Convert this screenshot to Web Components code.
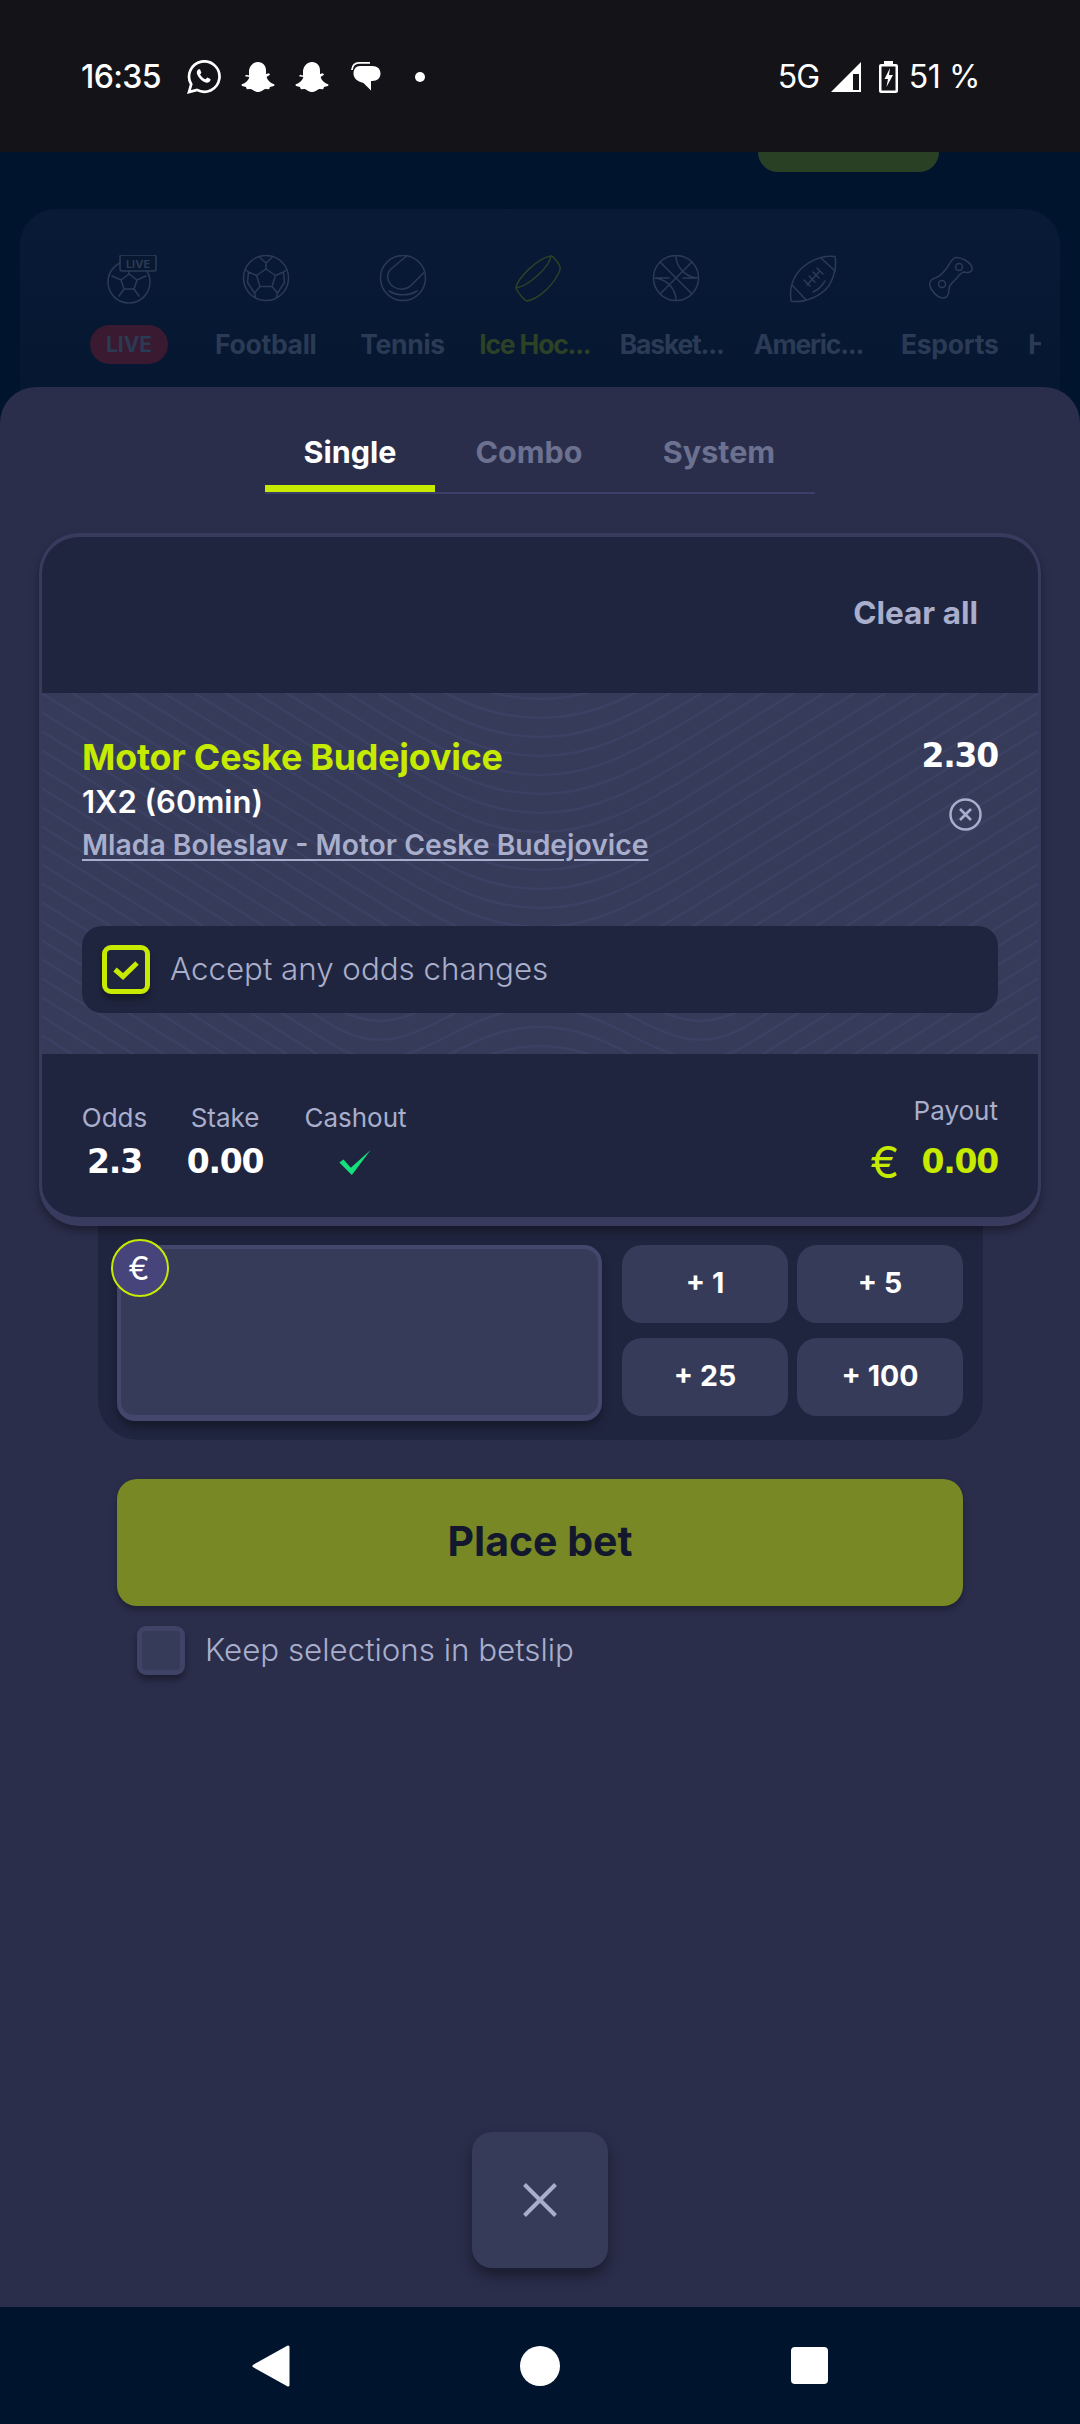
<!DOCTYPE html>
<html>
<head>
<meta charset="utf-8">
<title>Betslip</title>
<style>
  html, body { margin: 0; padding: 0; background: #00142e; }
  body { font-family: "Inter", "Noto Sans", sans-serif; }
</style>
</head>
<body>
<bet-page></bet-page>

<script>
// small helper, every element below has the same constructor otherwise
function shadow(el, html) {
  const tpl = document.createElement('template');
  tpl.innerHTML = html;
  el.attachShadow({ mode: 'open' }).appendChild(tpl.content.cloneNode(true));
}

const SNAP = `<svg width="34" height="32" viewBox="0 0 34 32"><path fill="#fff" d="M17 1c5 0 8 3.600 8 8.500v3.500l3-.8 1 1.600-3.400 2.200c.8 3.200 3.400 6 7.400 7.200.8.300.6 1.400-.2 1.700l-3.800 1-.8 2.400-3.800-.2c-2.400.4-3.800 3-7.400 3s-5-2.600-7.400-3l-3.800.2-.8-2.400-3.800-1c-.8-.3-1-1.400-.2-1.700 4-1.200 6.600-4 7.400-7.200L4 15.300l1-1.600 3 .8V9.500C9 4.600 12 1 17 1z"/></svg>`;

class StatusBar extends HTMLElement {
  constructor() {
    super();
    shadow(this, `
    <style>
      :host { display: flex; justify-content: space-between; box-sizing: border-box; height: 152px; padding: 60px 100px 0 81px; background: #141418; color: #fff; font: 500 32px/34px "Inter", sans-serif; }
      .side { display: flex; align-items: center; height: 34px; }
      svg { display: block; flex: none; }
      .time { width: 78px; letter-spacing: -.6px; }
      .g5 { width: 43px; margin-right: 10px; letter-spacing: -1px; font-weight: 400; }
      .pct { margin-left: 11px; font-weight: 400; letter-spacing: -.4px; white-space: nowrap; }
    </style>
    <div class="side">
      <span class="time">16:35</span>
      <svg style="margin-left:28px" width="34" height="34" viewBox="0 0 34 34"><path fill="none" stroke="#fff" stroke-width="2.700" d="M2 32l2.200-7.700A15.200 15.200 0 1 1 10 29.900z"/><path fill="#fff" d="M12.200 9.200c-.5 0-1.400.4-1.900 1.300-1 1.600-.6 4 1.700 7 2.500 3.300 5.400 5 7.800 5.200 1.500.1 3.300-1 3.600-2.400.1-.6.100-1 0-1.200l-3.200-1.600-1.600 1.800c-2-.6-4.500-2.800-5.500-4.900l1.300-1.600-1.300-3.400c-.2-.2-.6-.2-.9-.2z"/></svg>
      <span style="margin-left:20px">${SNAP}</span>
      <span style="margin-left:20px">${SNAP}</span>
      <svg style="margin-left:22px" width="30" height="30" viewBox="0 0 30 30"><path fill="#fff" d="M9 4h12c5.500 0 8.500 3 8.500 7.500S26.500 19 21 19h-1v9.500L12.500 21C6 19.500 2.500 16 2.500 11.500 2.500 7 5 4 9 4z"/><path fill="none" stroke="#141418" stroke-width="1.500" d="M1 10C1 5 4 2.600 8 2.600h12"/><path fill="none" stroke="#fff" stroke-width="1.800" d="M.9 8C1.500 3 4.600.9 8 .9h11"/></svg>
      <svg style="margin-left:34px" width="10" height="10" viewBox="0 0 10 10"><circle cx="5" cy="5" r="5" fill="#fff"/></svg>
    </div>
    <div class="side">
      <span class="g5">5G</span>
      <svg width="30" height="30" viewBox="0 0 30 30"><path fill="#fff" fill-rule="evenodd" d="M30 0v30H0zM28 12h-6v16h6z"/></svg>
      <svg style="margin-left:18px" width="19" height="32" viewBox="0 0 19 32"><path fill="#fff" fill-rule="evenodd" d="M5 0h9v3h3c1.100 0 2 .9 2 2v25c0 1.100-.9 2-2 2H2c-1.100 0-2-.9-2-2V5c0-1.100.9-2 2-2h3zM2.500 5.500v24h14v-24zM11 7l-5.500 11H9l-1.500 8 6.500-12h-4z"/></svg>
      <span class="pct">51 %</span>
    </div>`);
  }
}
customElements.define('status-bar', StatusBar);

const SPORT_ICONS = {
  live: `<circle cx="24" cy="27" r="21"/><path d="M24 19l8 6-3 9H19l-3-9zM24 19v-7M32 25l9-4M29 34l5 7M19 34l-5 7M16 25l-9-4M15 9l9 3 9-3"/><rect x="15" y="0" width="36" height="16" rx="2" fill="#071830"/><text x="33" y="12.500" text-anchor="middle" font-size="11" font-weight="700" fill="#2b3b55" stroke="none" font-family="Inter, sans-serif">LIVE</text>`,
  football: `<circle cx="24" cy="23" r="22.500"/><path d="M24 14l9.500 6.500-3.500 11H18l-3.500-11zM24 14V8l-6-5.500M24 8l6-5.500M33.500 20.500l8-3.500 3-2M41.500 17l1 10.500M30 31.500l5.500 6.500-1 4.500M35.500 38l7-10.500M18 31.500L12.500 38l1 4.500M12.500 38l-7-10.500M14.500 20.500l-8-3.500-3-2M6.500 17l-1 10.500"/>`,
  tennis: `<circle cx="24" cy="23" r="22.500"/><path d="M27 1.500L12 14c-6 6-3 14 2 17.500 6 4 13 3.500 18-1l13-13"/><path d="M10 36c8 5 20 5 28 0"/>`,
  hockey: `<path d="M36 1c2 0 8 7 9 11 .5 2-1 6-3 9-6 11-19 23-30 25-3-1-9-8-11-13C2 24 22 3 36 1z"/><path d="M1 33c12-2 33-20 35-32"/>`,
  basket: `<circle cx="24" cy="23" r="22.500"/><path d="M8 7l32 32M40 7L8 39M24 1c0 8 6 20 21 22M24 45C24 37 18 25 3 23M3 23h14M31 23h14"/>`,
  american: `<path d="M46 1.500c-14-2-30 6-38 17C3 26 .5 36 2 45c0 1 1 1.500 2 1.500 12 1 28-5 36-16C45 22 48 12 46 1.500z"/><path d="M32 3l14 13M3 30l14 15M18 30l12-13M20 21l6 6M24 17l6 6M28 13l6 6M15 25l6 6M36 26c-3 5-7 9-12 11"/>`,
  esports: `<path d="M27 4c3-3 8-1 12 1 5 3 8 6 7 10-1 3-5 3-8 2-3 0-6 5-10 9-3 3-5 4-5 8 0 5-2 9-6 9-5 0-12-7-13-12-1-4 1-7 5-8 5-1 8-5 11-9 3-3 3-6 7-10z"/><circle cx="33" cy="12" r="3.500"/><circle cx="16" cy="29" r="3.500"/>`
};

class SportItem extends HTMLElement {
  constructor() {
    super();
    const icon = SPORT_ICONS[this.getAttribute('icon')] || '';
    const stroke = this.getAttribute('tone') === 'active' ? '#2d4126' : '#2b3b55';
    shadow(this, `
    <style>
      :host { display: flex; flex: 0 0 136.800px; flex-direction: column; align-items: center; }
      svg { display: block; width: 48px; height: 48px; overflow: visible; fill: none; stroke: ${stroke}; stroke-width: 1.500; stroke-linejoin: round; stroke-linecap: round; }
      .label { margin-top: 22px; height: 39px; color: ${stroke}; font: 700 26.500px/39px "Inter", sans-serif; letter-spacing: -.3px; white-space: nowrap; }
      :host([cut]) .label { padding-right: 9px; letter-spacing: -1.200px; }
      :host([tone="live"]) .label { width: 78px; border-radius: 20px; background: #3a1a30; font-size: 21px; text-align: center; letter-spacing: 0; }
    </style>
    <svg viewBox="0 0 48 48">${icon}</svg>
    <span class="label"><slot></slot></span>`);
  }
}
customElements.define('sport-item', SportItem);

class SportStrip extends HTMLElement {
  constructor() {
    super();
    shadow(this, `
    <style>
      :host { display: block; box-sizing: border-box; height: 238px; margin: 37px 20px 0; padding: 46px 19px 0 40.600px; border-radius: 36px 36px 0 0; background: linear-gradient(#081a36, #05162f); }
      .row { display: flex; overflow: hidden; }
      .tail { flex: 0 0 60px; padding: 70px 0 0 10px; color: #2b3b55; font: 700 26.500px/39px "Inter", sans-serif; }
    </style>
    <div class="row">
      <sport-item icon="live" tone="live">LIVE</sport-item>
      <sport-item icon="football">Football</sport-item>
      <sport-item icon="tennis">Tennis</sport-item>
      <sport-item icon="hockey" tone="active" cut>Ice Hoc...</sport-item>
      <sport-item icon="basket" cut>Basket...</sport-item>
      <sport-item icon="american" cut>Americ...</sport-item>
      <sport-item icon="esports">Esports</sport-item>
      <div class="tail">H</div>
    </div>`);
  }
}
customElements.define('sport-strip', SportStrip);

class BackdropPage extends HTMLElement {
  constructor() {
    super();
    shadow(this, `
    <style>
      :host { display: block; height: 275px; overflow: hidden; background: #00142e; }
      .deposit { width: 181px; height: 20px; margin-left: 758px; border-radius: 0 0 20px 20px; background: #2a4025; }
    </style>
    <div class="deposit"></div>
    <sport-strip></sport-strip>`);
  }
}
customElements.define('backdrop-page', BackdropPage);

class BetTabs extends HTMLElement {
  constructor() {
    super();
    shadow(this, `
    <style>
      :host { display: flex; box-sizing: border-box; width: 550px; height: 69px; margin-left: 265px; border-bottom: 2px solid #3b4068; font: 700 30.500px/54px "Inter", sans-serif; color: #6c7190; }
      .tab { flex: none; text-align: center; }
      .on { position: relative; width: 170px; color: #fff; }
      .on::after { content: ""; position: absolute; left: 0; right: 0; top: 60px; height: 7px; background: #c6ea00; }
      .combo { width: 188px; }
      .system { width: 192px; }
    </style>
    <div class="tab on">Single</div>
    <div class="tab combo">Combo</div>
    <div class="tab system">System</div>`);
  }
}
customElements.define('bet-tabs', BetTabs);

class ContourBg extends HTMLElement {
  constructor() {
    super();
    // contour lines: V shaped on the flanks, U in the upper middle, a bump at the bottom middle
    const cx = 501, k = 0.62, w = 1002, step = 19;
    let d = '';
    const flank = (y, o) => y - k * (o - 60);
    for (let y = 310; y > -20; y -= step) {
      const far = 640;
      d += `M${cx - far} ${flank(y, far)}L${cx - 170} ${flank(y, 170)}C${cx - 90} ${y - 18} ${cx - 50} ${y} ${cx} ${y}C${cx + 50} ${y} ${cx + 90} ${y - 18} ${cx + 170} ${flank(y, 170)}L${cx + far} ${flank(y, far)}`;
    }
    for (let y = 310 + step; y < 720; y += step) {
      const far = 640, f = flank(y, 210), p = Math.max(f - 35, 240);
      d += `M${cx - far} ${flank(y, far)}L${cx - 210} ${f}C${cx - 130} ${f + 50} ${cx - 90} ${p} ${cx} ${p}C${cx + 90} ${p} ${cx + 130} ${f + 50} ${cx + 210} ${f}L${cx + far} ${flank(y, far)}`;
    }
    shadow(this, `
    <style>
      :host { display: block; position: absolute; inset: 0; overflow: hidden; }
      svg { display: block; }
    </style>
    <svg width="${w}" height="361" viewBox="0 0 ${w} 361"><path d="${d}" fill="none" stroke="#3c4163" stroke-width="2.500"/></svg>`);
  }
}
customElements.define('contour-bg', ContourBg);

class CheckRow extends HTMLElement {
  constructor() {
    super();
    shadow(this, `
    <style>
      :host { display: flex; align-items: center; font: 300 31.300px/40px "Inter", sans-serif; color: #a8aecb; }
      .box { display: flex; align-items: center; justify-content: center; box-sizing: border-box; width: 48px; height: 49px; margin-right: 20px; border: 5px solid #3f4366; border-radius: 9px; background: #363b5a; box-shadow: 0 5px 6px rgba(0,0,0,.35); }
      :host([checked]) .box { border-color: #c6ea00; background: #20253f; }
      svg { display: none; }
      :host([checked]) svg { display: block; }
      span { padding-bottom: 2px; }
    </style>
    <div class="box"><svg width="26" height="20" viewBox="0 0 26 20"><path d="M2 9.500l8 7L24 3" fill="none" stroke="#c6ea00" stroke-width="5"/></svg></div>
    <span><slot></slot></span>`);
  }
}
customElements.define('check-row', CheckRow);

class BetCard extends HTMLElement {
  constructor() {
    super();
    shadow(this, `
    <style>
      :host { display: block; box-sizing: border-box; width: 1002px; height: 693px; margin: 39px 0 0 39px; border: solid #383b5e; border-width: 4px 3px 9px; border-radius: 40px; background: #20253f; box-shadow: 0 5px 8px rgba(0,0,0,.35); overflow: hidden; position: relative; z-index: 1; }
      .head { display: flex; justify-content: flex-end; align-items: center; box-sizing: border-box; height: 156px; padding: 0 60px 4px 0; color: #a8aecb; font: 700 31.500px/40px "Inter", sans-serif; }
      .selection { position: relative; box-sizing: border-box; height: 361px; margin: 0 -3px; padding: 44px 43px 0; background: #363b5a; }
      .top { position: relative; display: flex; justify-content: space-between; }
      .team { color: #c6ea00; font: 700 35.800px/40px "Inter", sans-serif; letter-spacing: -.2px; }
      .market { margin-top: 5px; color: #fff; font: 600 31px/40px "Inter", sans-serif; }
      .match { margin-top: 5px; color: #a8aecb; font: 600 28.300px/36px "Inter", sans-serif; text-decoration: underline; text-underline-offset: 4px; }
      .price { display: flex; flex-direction: column; align-items: flex-end; }
      .num { font-family: "DejaVu Sans", sans-serif; font-weight: 700; letter-spacing: -1.200px; }
      .price .num { color: #fff; font-size: 33px; line-height: 38px; }
      .price svg { display: block; margin: 23px 16px 0 0; }
      check-row { position: relative; box-sizing: border-box; height: 87px; margin-top: 63px; padding-left: 20px; border-radius: 20px; background: #20253f; }
      .foot { display: flex; justify-content: space-between; box-sizing: border-box; height: 163px; padding: 0 40px; }
      .cols { display: grid; grid-template-columns: 65px 68px 105px; column-gap: 44px; grid-template-rows: 36px 44px; row-gap: 4px; padding-top: 46px; justify-items: center; }
      .lab { color: #a8aecb; font: 400 26px/36px "Inter", sans-serif; white-space: nowrap; }
      .cols .num { color: #fff; font-size: 33px; line-height: 44px; }
      .cols svg { align-self: center; }
      .pay { padding-top: 39px; text-align: right; }
      .amt { display: flex; align-items: center; justify-content: flex-end; height: 44px; margin-top: 11px; color: #c6ea00; }
      .amt .euro { margin-right: 22px; font: 400 44px/44px "Inter", sans-serif; }
      .amt .num { font-size: 33px; line-height: 44px; }
    </style>
    <div class="head">Clear all</div>
    <div class="selection">
      <contour-bg></contour-bg>
      <div class="top">
        <div>
          <div class="team">Motor Ceske Budejovice</div>
          <div class="market">1X2 (60min)</div>
          <div class="match">Mlada Boleslav - Motor Ceske Budejovice</div>
        </div>
        <div class="price">
          <span class="num">2.30</span>
          <svg width="33" height="33" viewBox="0 0 33 33"><circle cx="16.500" cy="16.500" r="15" fill="none" stroke="#a8aecb" stroke-width="2.500"/><path d="M11 11l11 11M22 11L11 22" stroke="#a8aecb" stroke-width="2.500"/></svg>
        </div>
      </div>
      <check-row checked>Accept any odds changes</check-row>
    </div>
    <div class="foot">
      <div class="cols">
        <span class="lab">Odds</span><span class="lab">Stake</span><span class="lab">Cashout</span>
        <span class="num">2.3</span><span class="num">0.00</span>
        <svg width="33" height="25" viewBox="0 0 31 24"><path d="M0 12l4-3 7 8L30 0 12 24z" fill="#14e07c"/></svg>
      </div>
      <div class="pay">
        <div class="lab">Payout</div>
        <div class="amt"><span class="euro">€</span><span class="num">0.00</span></div>
      </div>
    </div>`);
  }
}
customElements.define('bet-card', BetCard);

class StakePanel extends HTMLElement {
  constructor() {
    super();
    shadow(this, `
    <style>
      :host { display: flex; box-sizing: border-box; width: 885px; height: 214px; margin-left: 98px; padding: 19px 20px 0 19px; border-radius: 0 0 40px 40px; background: #20253f; }
      .input { position: relative; box-sizing: border-box; flex: none; width: 485px; height: 176px; border: solid #43476c; border-width: 4px 4px 6px; border-radius: 18px; background: #363b5a; box-shadow: 0 6px 8px rgba(0,0,0,.3); }
      .cur { position: absolute; left: -10px; top: -10px; box-sizing: border-box; width: 58px; height: 58px; border: 2px solid #c6ea00; border-radius: 50%; background: #47447c; color: #fff; font: 400 32px/56px "Inter", sans-serif; text-align: center; text-indent: -2px; }
      .btns { display: grid; grid-template-columns: 166px 166px; grid-template-rows: 78px 78px; gap: 15px 9px; margin-left: 20px; }
      .btn { border-radius: 20px; background: #363b5a; color: #fff; font: 700 28.500px/76px "Inter", sans-serif; text-align: center; }
    </style>
    <div class="input"><span class="cur">€</span></div>
    <div class="btns">
      <div class="btn">+ 1</div><div class="btn">+ 5</div>
      <div class="btn">+ 25</div><div class="btn">+ 100</div>
    </div>`);
  }
}
customElements.define('stake-panel', StakePanel);

class BetSheet extends HTMLElement {
  constructor() {
    super();
    shadow(this, `
    <style>
      :host { display: flex; flex-direction: column; flex: 1; box-sizing: border-box; position: relative; margin-top: -40px; padding: 38px 0 39px; border-radius: 36px 36px 0 0; background: #2a2e4b; }
      .place { box-sizing: border-box; width: 846px; height: 127px; margin: 39px 0 0 117px; border-radius: 20px; background: #778825; box-shadow: 0 4px 6px rgba(0,0,0,.3); color: #14182e; font: 700 41px/125px "Inter", sans-serif; text-align: center; }
      check-row { margin: 20px 0 0 137px; }
      .close { display: flex; align-items: center; justify-content: center; width: 136px; height: 136px; margin: auto 0 0 472px; border-radius: 20px; background: #363b5a; box-shadow: 0 8px 14px rgba(0,0,0,.4); }
    </style>
    <bet-tabs></bet-tabs>
    <bet-card></bet-card>
    <stake-panel></stake-panel>
    <div class="place">Place bet</div>
    <check-row>Keep selections in betslip</check-row>
    <div class="close"><svg width="34" height="34" viewBox="0 0 34 34"><path d="M1.500 1.500l31 31M32.500 1.500l-31 31" stroke="#a8aecb" stroke-width="4"/></svg></div>`);
  }
}
customElements.define('bet-sheet', BetSheet);

class NavBar extends HTMLElement {
  constructor() {
    super();
    shadow(this, `
    <style>
      :host { display: flex; align-items: center; position: relative; box-sizing: border-box; height: 117px; padding: 0 0 0 252px; background: #00142e; }
      svg { display: block; flex: none; }
    </style>
    <svg width="38" height="42" viewBox="0 0 38 42"><path fill="#fff" stroke="#fff" stroke-width="3" stroke-linejoin="round" d="M36 2v38L2 21z"/></svg>
    <svg style="margin-left:230px" width="40" height="40" viewBox="0 0 40 40"><circle cx="20" cy="20" r="20" fill="#fff"/></svg>
    <svg style="margin-left:231px" width="37" height="37" viewBox="0 0 37 37"><rect width="37" height="37" rx="4" fill="#fff"/></svg>`);
  }
}
customElements.define('nav-bar', NavBar);

class BetPage extends HTMLElement {
  constructor() {
    super();
    shadow(this, `
    <style>
      :host { display: flex; flex-direction: column; width: 1080px; height: 2424px; overflow: hidden; }
    </style>
    <status-bar></status-bar>
    <backdrop-page></backdrop-page>
    <bet-sheet></bet-sheet>
    <nav-bar></nav-bar>`);
  }
}
customElements.define('bet-page', BetPage);
</script>
</body>
</html>
